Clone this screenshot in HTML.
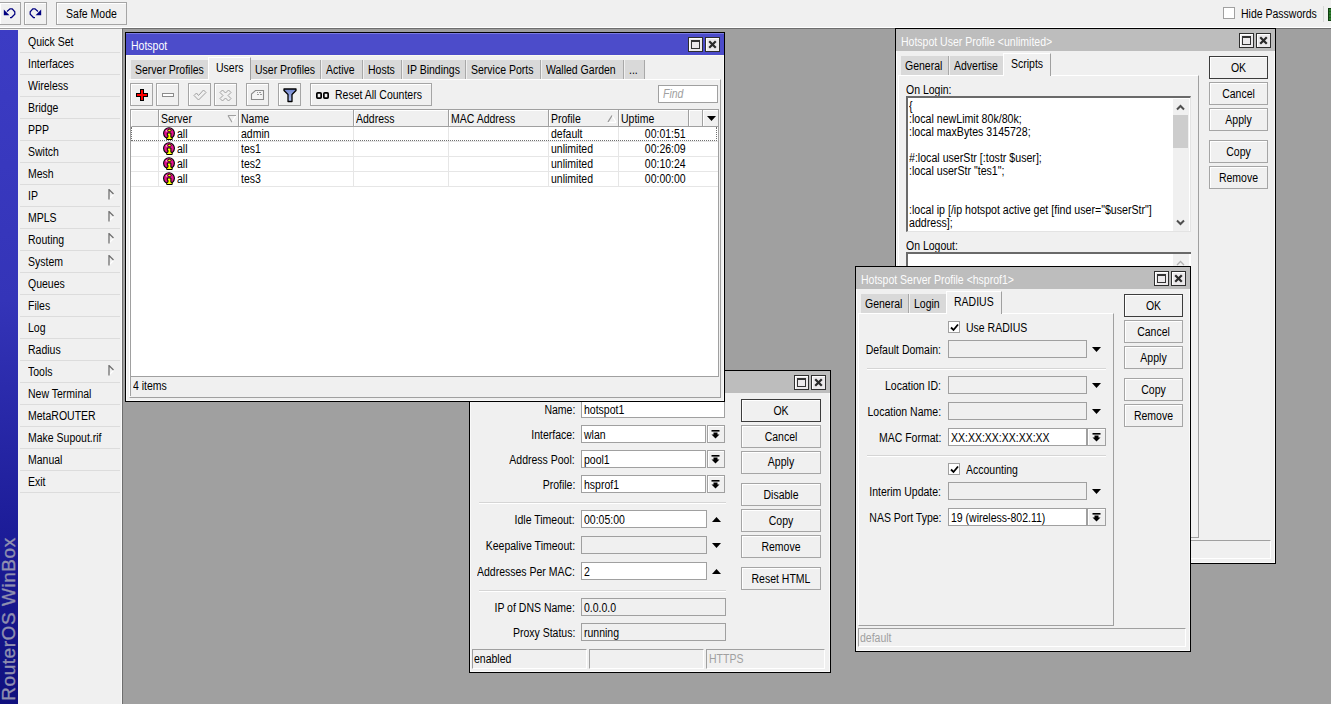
<!DOCTYPE html><html><head><meta charset="utf-8"><style>
*{margin:0;padding:0;box-sizing:border-box}
html,body{width:1331px;height:704px;overflow:hidden;background:#f0f0f0;position:relative}
body>div,body>svg{position:absolute}
.t{position:absolute;font-family:"Liberation Sans",sans-serif;font-size:12px;line-height:14px;white-space:pre;color:#000;transform:scaleX(0.875);transform-origin:0 0}
</style></head><body>
<div style="left:-1px;top:2px;width:22px;height:23px;border:1px solid #a5a5a5;background:#f0f0f0;box-shadow:inset 1px 1px 0 #fff;"></div>
<div style="left:24px;top:2px;width:23px;height:23px;border:1px solid #a5a5a5;background:#f0f0f0;box-shadow:inset 1px 1px 0 #fff;"></div>
<svg style="left:0px;top:0px;width:50px;height:28px" viewBox="0 0 50 28"><path d="M7 11.5L10 8.8H12.2L14.8 11.8V14.2L11.5 17.5H10" stroke="#000080" stroke-width="1.25" fill="none"/><path d="M3.8 9.6V15.2H9.4Z" fill="#000080"/><path d="M38 11.5L35 8.8H32.8L30.2 11.8V14.2L33.5 17.5H35" stroke="#000080" stroke-width="1.25" fill="none"/><path d="M41.2 9.6V15.2H35.6Z" fill="#000080"/></svg>
<div style="left:56px;top:2px;width:71px;height:23px;border:1px solid #a5a5a5;background:#f0f0f0;box-shadow:inset 1px 1px 0 #fff;"></div>
<div class="t" style="left:56px;width:71px;text-align:center;top:7px;transform-origin:50% 0;">Safe Mode</div>
<div style="left:1223px;top:7px;width:12px;height:12px;border:1px solid #a0a0a0;background:#fff;"></div>
<div class="t" style="left:1241px;top:7px;">Hide Passwords</div>
<div style="left:1323px;top:6px;width:1px;height:16px;background:#d8d8d8;"></div>
<div style="left:1328px;top:8px;width:13px;height:13px;background:repeating-linear-gradient(#2a7a2a 0 2px,#1c5a1c 2px 3px);border:1px solid #0f3f0f;"></div>
<div style="left:0px;top:27px;width:1331px;height:1px;background:#fff;"></div>
<div style="left:0px;top:28px;width:1331px;height:1px;background:#a0a0a0;"></div>
<div style="left:0px;top:30px;width:18px;height:674px;background:linear-gradient(#3c3cc4 0%,#3434b8 40%,#1c1c98 75%,#10107e 100%);"></div>
<div class="t" style="left:28px;top:35px;">Quick Set</div>
<div style="left:20px;top:52px;width:100px;height:1px;background:#dcdcdc;"></div>
<div class="t" style="left:28px;top:57px;">Interfaces</div>
<div style="left:20px;top:74px;width:100px;height:1px;background:#dcdcdc;"></div>
<div class="t" style="left:28px;top:79px;">Wireless</div>
<div style="left:20px;top:96px;width:100px;height:1px;background:#dcdcdc;"></div>
<div class="t" style="left:28px;top:101px;">Bridge</div>
<div style="left:20px;top:118px;width:100px;height:1px;background:#dcdcdc;"></div>
<div class="t" style="left:28px;top:123px;">PPP</div>
<div style="left:20px;top:140px;width:100px;height:1px;background:#dcdcdc;"></div>
<div class="t" style="left:28px;top:145px;">Switch</div>
<div style="left:20px;top:162px;width:100px;height:1px;background:#dcdcdc;"></div>
<div class="t" style="left:28px;top:167px;">Mesh</div>
<div style="left:20px;top:184px;width:100px;height:1px;background:#dcdcdc;"></div>
<div class="t" style="left:28px;top:189px;">IP</div>
<div style="left:20px;top:206px;width:100px;height:1px;background:#dcdcdc;"></div>
<svg style="left:108px;top:189px;width:7px;height:11px" viewBox="0 0 7 11"><path d="M1 10L5.5 5.5" stroke="#fff" stroke-width="1.2"/><path d="M1 10.5V0.5L5.5 5" stroke="#707070" stroke-width="1.3" fill="none"/></svg>
<div class="t" style="left:28px;top:211px;">MPLS</div>
<div style="left:20px;top:228px;width:100px;height:1px;background:#dcdcdc;"></div>
<svg style="left:108px;top:211px;width:7px;height:11px" viewBox="0 0 7 11"><path d="M1 10L5.5 5.5" stroke="#fff" stroke-width="1.2"/><path d="M1 10.5V0.5L5.5 5" stroke="#707070" stroke-width="1.3" fill="none"/></svg>
<div class="t" style="left:28px;top:233px;">Routing</div>
<div style="left:20px;top:250px;width:100px;height:1px;background:#dcdcdc;"></div>
<svg style="left:108px;top:233px;width:7px;height:11px" viewBox="0 0 7 11"><path d="M1 10L5.5 5.5" stroke="#fff" stroke-width="1.2"/><path d="M1 10.5V0.5L5.5 5" stroke="#707070" stroke-width="1.3" fill="none"/></svg>
<div class="t" style="left:28px;top:255px;">System</div>
<div style="left:20px;top:272px;width:100px;height:1px;background:#dcdcdc;"></div>
<svg style="left:108px;top:255px;width:7px;height:11px" viewBox="0 0 7 11"><path d="M1 10L5.5 5.5" stroke="#fff" stroke-width="1.2"/><path d="M1 10.5V0.5L5.5 5" stroke="#707070" stroke-width="1.3" fill="none"/></svg>
<div class="t" style="left:28px;top:277px;">Queues</div>
<div style="left:20px;top:294px;width:100px;height:1px;background:#dcdcdc;"></div>
<div class="t" style="left:28px;top:299px;">Files</div>
<div style="left:20px;top:316px;width:100px;height:1px;background:#dcdcdc;"></div>
<div class="t" style="left:28px;top:321px;">Log</div>
<div style="left:20px;top:338px;width:100px;height:1px;background:#dcdcdc;"></div>
<div class="t" style="left:28px;top:343px;">Radius</div>
<div style="left:20px;top:360px;width:100px;height:1px;background:#dcdcdc;"></div>
<div class="t" style="left:28px;top:365px;">Tools</div>
<div style="left:20px;top:382px;width:100px;height:1px;background:#dcdcdc;"></div>
<svg style="left:108px;top:365px;width:7px;height:11px" viewBox="0 0 7 11"><path d="M1 10L5.5 5.5" stroke="#fff" stroke-width="1.2"/><path d="M1 10.5V0.5L5.5 5" stroke="#707070" stroke-width="1.3" fill="none"/></svg>
<div class="t" style="left:28px;top:387px;">New Terminal</div>
<div style="left:20px;top:404px;width:100px;height:1px;background:#dcdcdc;"></div>
<div class="t" style="left:28px;top:409px;">MetaROUTER</div>
<div style="left:20px;top:426px;width:100px;height:1px;background:#dcdcdc;"></div>
<div class="t" style="left:28px;top:431px;">Make Supout.rif</div>
<div style="left:20px;top:448px;width:100px;height:1px;background:#dcdcdc;"></div>
<div class="t" style="left:28px;top:453px;">Manual</div>
<div style="left:20px;top:470px;width:100px;height:1px;background:#dcdcdc;"></div>
<div class="t" style="left:28px;top:475px;">Exit</div>
<div style="left:20px;top:492px;width:100px;height:1px;background:#dcdcdc;"></div>
<div class="t" style="left:-76px;top:610px;width:170px;height:18px;font-size:19px;line-height:18px;letter-spacing:0.55px;color:#9090b0;-webkit-text-stroke:0.35px #9090b0;transform:rotate(-90deg);transform-origin:85px 9px;text-align:center">RouterOS WinBox</div>
<div style="left:121px;top:29px;width:1px;height:675px;background:#fafafa;"></div>
<div style="left:122px;top:28px;width:1209px;height:676px;background:#a0a0a0;"></div>
<div style="left:122px;top:28px;width:1px;height:676px;background:#6e6e6e;"></div>
<div style="left:122px;top:28px;width:1209px;height:1px;background:#6e6e6e;"></div>
<div style="left:895px;top:28px;width:381px;height:536px;background:#000;"></div>
<div style="left:896px;top:29px;width:379px;height:534px;background:#fafafa;"></div>
<div style="left:897px;top:30px;width:377px;height:532px;background:#f0f0f0;"></div>
<div style="left:896px;top:29px;width:379px;height:22px;background:#bdbdbd;"></div>
<div class="t" style="left:901px;top:35px;color:#fcfcfc;">Hotspot User Profile &lt;unlimited&gt;</div>
<div style="left:1239px;top:33px;width:15px;height:15px;border:1px solid #2e2e2e;background:#ebe9eb;box-shadow:inset 1px 1px 0 #fff;"></div>
<div style="left:1242px;top:36px;width:9px;height:9px;border:1px solid #333;border-top-width:2px;background:transparent;"></div>
<div style="left:1256px;top:33px;width:15px;height:15px;border:1px solid #2e2e2e;background:#ebe9eb;box-shadow:inset 1px 1px 0 #fff;"></div>
<svg style="left:1259px;top:36px;width:9px;height:9px" viewBox="0 0 9 9"><path d="M2 2L7 7M7 2L2 7" stroke="#2a2a2a" stroke-width="2.2" stroke-linecap="square"/></svg>
<div style="left:898px;top:75px;width:301px;height:463px;border-left:1px solid #fff;border-top:1px solid #fff;border-right:1px solid #a0a0a0;border-bottom:1px solid #a0a0a0;"></div>
<div style="left:901px;top:56px;width:48px;height:19px;background:#d9d9d9;border-right:1px solid #a8a8a8;"></div>
<div class="t" style="left:905px;top:59px;">General</div>
<div style="left:950px;top:56px;width:53px;height:19px;background:#d9d9d9;"></div>
<div class="t" style="left:954px;top:59px;">Advertise</div>
<div style="left:1003px;top:53px;width:48px;height:23px;background:#f0f0f0;border-left:1px solid #fff;border-top:1px solid #fff;border-right:1px solid #a0a0a0;"></div>
<div class="t" style="left:1011px;top:57px;">Scripts</div>
<div class="t" style="left:906px;top:83px;">On Login:</div>
<div style="left:906px;top:96px;width:285px;height:136px;background:#fff;border-top:2px solid #6a6a6a;border-left:2px solid #6a6a6a;border-right:1px solid #e3e3e3;border-bottom:1px solid #e3e3e3;"></div>
<div class="t" style="left:909px;top:99px;transform:scaleX(0.885);">{</div>
<div class="t" style="left:909px;top:112px;transform:scaleX(0.885);">:local newLimit 80k/80k;</div>
<div class="t" style="left:909px;top:125px;transform:scaleX(0.885);">:local maxBytes 3145728;</div>
<div class="t" style="left:909px;top:151px;transform:scaleX(0.885);">#:local userStr [:tostr $user];</div>
<div class="t" style="left:909px;top:164px;transform:scaleX(0.885);">:local userStr "tes1";</div>
<div class="t" style="left:909px;top:203px;transform:scaleX(0.885);">:local ip [/ip hotspot active get [find user="$userStr"]</div>
<div class="t" style="left:909px;top:216px;transform:scaleX(0.885);">address];</div>
<div style="left:1173px;top:99px;width:16px;height:132px;background:#f0f0f0;"></div>
<div style="left:1173px;top:115px;width:15px;height:33px;background:#cdcdcd;"></div>
<svg style="left:1176px;top:103px;width:9px;height:8px" viewBox="0 0 9 8"><path d="M1 6.5L4.5 3L8 6.5" stroke="#505050" stroke-width="2" fill="none"/></svg>
<svg style="left:1176px;top:219px;width:9px;height:8px" viewBox="0 0 9 8"><path d="M1 1.5L4.5 5L8 1.5" stroke="#505050" stroke-width="2" fill="none"/></svg>
<div class="t" style="left:906px;top:239px;">On Logout:</div>
<div style="left:906px;top:252px;width:285px;height:149px;background:#fff;border-top:2px solid #6a6a6a;border-left:2px solid #6a6a6a;"></div>
<div style="left:1173px;top:254px;width:16px;height:147px;background:#f0f0f0;"></div>
<svg style="left:1176px;top:260px;width:9px;height:6px" viewBox="0 0 9 6"><path d="M1 5L4.5 1.5L8 5" stroke="#b0b0b0" stroke-width="1.3" fill="none"/></svg>
<div style="left:1209px;top:56px;width:59px;height:23px;border:1px solid #3c3c3c;background:#f0f0f0;box-shadow:inset 1px 1px 0 #fff;"></div>
<div class="t" style="left:1209px;width:59px;text-align:center;top:61px;transform-origin:50% 0;">OK</div>
<div style="left:1209px;top:82px;width:59px;height:23px;border:1px solid #a5a5a5;background:#f0f0f0;box-shadow:inset 1px 1px 0 #fff;"></div>
<div class="t" style="left:1209px;width:59px;text-align:center;top:87px;transform-origin:50% 0;">Cancel</div>
<div style="left:1209px;top:108px;width:59px;height:23px;border:1px solid #a5a5a5;background:#f0f0f0;box-shadow:inset 1px 1px 0 #fff;"></div>
<div class="t" style="left:1209px;width:59px;text-align:center;top:113px;transform-origin:50% 0;">Apply</div>
<div style="left:1209px;top:140px;width:59px;height:23px;border:1px solid #a5a5a5;background:#f0f0f0;box-shadow:inset 1px 1px 0 #fff;"></div>
<div class="t" style="left:1209px;width:59px;text-align:center;top:145px;transform-origin:50% 0;">Copy</div>
<div style="left:1209px;top:166px;width:59px;height:23px;border:1px solid #a5a5a5;background:#f0f0f0;box-shadow:inset 1px 1px 0 #fff;"></div>
<div class="t" style="left:1209px;width:59px;text-align:center;top:171px;transform-origin:50% 0;">Remove</div>
<div style="left:898px;top:540px;width:373px;height:19px;border-top:1px solid #a0a0a0;border-left:1px solid #a0a0a0;border-right:1px solid #fff;border-bottom:1px solid #fff;"></div>
<div style="left:855px;top:266px;width:336px;height:386px;background:#000;"></div>
<div style="left:856px;top:267px;width:334px;height:384px;background:#fafafa;"></div>
<div style="left:857px;top:268px;width:332px;height:382px;background:#f0f0f0;"></div>
<div style="left:856px;top:267px;width:334px;height:22px;background:#bdbdbd;"></div>
<div class="t" style="left:861px;top:273px;color:#fcfcfc;">Hotspot Server Profile &lt;hsprof1&gt;</div>
<div style="left:1154px;top:271px;width:15px;height:15px;border:1px solid #2e2e2e;background:#ebe9eb;box-shadow:inset 1px 1px 0 #fff;"></div>
<div style="left:1157px;top:274px;width:9px;height:9px;border:1px solid #333;border-top-width:2px;background:transparent;"></div>
<div style="left:1171px;top:271px;width:15px;height:15px;border:1px solid #2e2e2e;background:#ebe9eb;box-shadow:inset 1px 1px 0 #fff;"></div>
<svg style="left:1174px;top:274px;width:9px;height:9px" viewBox="0 0 9 9"><path d="M2 2L7 7M7 2L2 7" stroke="#2a2a2a" stroke-width="2.2" stroke-linecap="square"/></svg>
<div style="left:858px;top:313px;width:256px;height:313px;border-left:1px solid #fff;border-top:1px solid #fff;border-right:1px solid #a0a0a0;border-bottom:1px solid #a0a0a0;"></div>
<div style="left:861px;top:294px;width:48px;height:19px;background:#d9d9d9;border-right:1px solid #a8a8a8;"></div>
<div class="t" style="left:865px;top:297px;">General</div>
<div style="left:910px;top:294px;width:36px;height:19px;background:#d9d9d9;"></div>
<div class="t" style="left:914px;top:297px;">Login</div>
<div style="left:946px;top:291px;width:56px;height:23px;background:#f0f0f0;border-left:1px solid #fff;border-top:1px solid #fff;border-right:1px solid #a0a0a0;"></div>
<div class="t" style="left:954px;top:295px;">RADIUS</div>
<div style="left:948px;top:321px;width:12px;height:12px;border:1px solid #a0a0a0;background:#fff;"></div>
<svg style="left:950px;top:323px;width:9px;height:9px" viewBox="0 0 9 9"><path d="M1 4.5L3.5 7L8 1.5" stroke="#000" stroke-width="1.8" fill="none"/></svg>
<div class="t" style="left:966px;top:321px;">Use RADIUS</div>
<div class="t" style="right:390px;top:343px;transform-origin:100% 0;">Default Domain:</div>
<div style="left:948px;top:340px;width:139px;height:18px;border:1px solid #a0a0a0;background:#f0f0f0;"></div>
<svg style="left:1092px;top:347px;width:9px;height:5px" viewBox="0 0 9 5"><path d="M0 0H9L4.5 5Z" fill="#000"/></svg>
<div style="left:867px;top:368px;width:239px;height:1px;background:#d5d5d5;"></div>
<div style="left:867px;top:369px;width:239px;height:1px;background:#fff;"></div>
<div class="t" style="right:390px;top:379px;transform-origin:100% 0;">Location ID:</div>
<div style="left:948px;top:376px;width:139px;height:18px;border:1px solid #a0a0a0;background:#f0f0f0;"></div>
<svg style="left:1092px;top:383px;width:9px;height:5px" viewBox="0 0 9 5"><path d="M0 0H9L4.5 5Z" fill="#000"/></svg>
<div class="t" style="right:390px;top:405px;transform-origin:100% 0;">Location Name:</div>
<div style="left:948px;top:402px;width:139px;height:18px;border:1px solid #a0a0a0;background:#f0f0f0;"></div>
<svg style="left:1092px;top:409px;width:9px;height:5px" viewBox="0 0 9 5"><path d="M0 0H9L4.5 5Z" fill="#000"/></svg>
<div class="t" style="right:390px;top:431px;transform-origin:100% 0;">MAC Format:</div>
<div style="left:948px;top:428px;width:139px;height:18px;border:1px solid #a0a0a0;background:#fff;"></div>
<div class="t" style="left:951px;top:431px;">XX:XX:XX:XX:XX:XX</div>
<div style="left:1087px;top:428px;width:19px;height:18px;border:1px solid #a0a0a0;background:#f0f0f0;box-shadow:inset 1px 1px 0 #fff;"></div>
<svg style="left:1092px;top:433px;width:9px;height:9px" viewBox="0 0 9 9"><rect x="0.5" y="0" width="8" height="1.6" fill="#000"/><path d="M2.5 2.5H6.5V4.5H8.5L4.5 8.5L0.5 4.5H2.5Z" fill="#000"/></svg>
<div style="left:867px;top:455px;width:239px;height:1px;background:#d5d5d5;"></div>
<div style="left:867px;top:456px;width:239px;height:1px;background:#fff;"></div>
<div style="left:948px;top:463px;width:12px;height:12px;border:1px solid #a0a0a0;background:#fff;"></div>
<svg style="left:950px;top:465px;width:9px;height:9px" viewBox="0 0 9 9"><path d="M1 4.5L3.5 7L8 1.5" stroke="#000" stroke-width="1.8" fill="none"/></svg>
<div class="t" style="left:966px;top:463px;">Accounting</div>
<div class="t" style="right:390px;top:485px;transform-origin:100% 0;">Interim Update:</div>
<div style="left:948px;top:482px;width:139px;height:18px;border:1px solid #a0a0a0;background:#f0f0f0;"></div>
<svg style="left:1092px;top:489px;width:9px;height:5px" viewBox="0 0 9 5"><path d="M0 0H9L4.5 5Z" fill="#000"/></svg>
<div class="t" style="right:390px;top:511px;transform-origin:100% 0;">NAS Port Type:</div>
<div style="left:948px;top:508px;width:139px;height:18px;border:1px solid #a0a0a0;background:#fff;"></div>
<div class="t" style="left:951px;top:511px;">19 (wireless-802.11)</div>
<div style="left:1087px;top:508px;width:19px;height:18px;border:1px solid #a0a0a0;background:#f0f0f0;box-shadow:inset 1px 1px 0 #fff;"></div>
<svg style="left:1092px;top:513px;width:9px;height:9px" viewBox="0 0 9 9"><rect x="0.5" y="0" width="8" height="1.6" fill="#000"/><path d="M2.5 2.5H6.5V4.5H8.5L4.5 8.5L0.5 4.5H2.5Z" fill="#000"/></svg>
<div style="left:1124px;top:294px;width:59px;height:23px;border:1px solid #3c3c3c;background:#f0f0f0;box-shadow:inset 1px 1px 0 #fff;"></div>
<div class="t" style="left:1124px;width:59px;text-align:center;top:299px;transform-origin:50% 0;">OK</div>
<div style="left:1124px;top:320px;width:59px;height:23px;border:1px solid #a5a5a5;background:#f0f0f0;box-shadow:inset 1px 1px 0 #fff;"></div>
<div class="t" style="left:1124px;width:59px;text-align:center;top:325px;transform-origin:50% 0;">Cancel</div>
<div style="left:1124px;top:346px;width:59px;height:23px;border:1px solid #a5a5a5;background:#f0f0f0;box-shadow:inset 1px 1px 0 #fff;"></div>
<div class="t" style="left:1124px;width:59px;text-align:center;top:351px;transform-origin:50% 0;">Apply</div>
<div style="left:1124px;top:378px;width:59px;height:23px;border:1px solid #a5a5a5;background:#f0f0f0;box-shadow:inset 1px 1px 0 #fff;"></div>
<div class="t" style="left:1124px;width:59px;text-align:center;top:383px;transform-origin:50% 0;">Copy</div>
<div style="left:1124px;top:404px;width:59px;height:23px;border:1px solid #a5a5a5;background:#f0f0f0;box-shadow:inset 1px 1px 0 #fff;"></div>
<div class="t" style="left:1124px;width:59px;text-align:center;top:409px;transform-origin:50% 0;">Remove</div>
<div style="left:858px;top:628px;width:328px;height:19px;border-top:1px solid #a0a0a0;border-left:1px solid #a0a0a0;border-right:1px solid #fff;border-bottom:1px solid #fff;"></div>
<div class="t" style="left:860px;top:631px;color:#a0a0a0;">default</div>
<div style="left:469px;top:370px;width:362px;height:303px;background:#000;"></div>
<div style="left:470px;top:371px;width:360px;height:301px;background:#fafafa;"></div>
<div style="left:471px;top:372px;width:358px;height:299px;background:#f0f0f0;"></div>
<div style="left:470px;top:371px;width:360px;height:22px;background:#bdbdbd;"></div>
<div style="left:794px;top:375px;width:15px;height:15px;border:1px solid #2e2e2e;background:#ebe9eb;box-shadow:inset 1px 1px 0 #fff;"></div>
<div style="left:797px;top:378px;width:9px;height:9px;border:1px solid #333;border-top-width:2px;background:transparent;"></div>
<div style="left:811px;top:375px;width:15px;height:15px;border:1px solid #2e2e2e;background:#ebe9eb;box-shadow:inset 1px 1px 0 #fff;"></div>
<svg style="left:814px;top:378px;width:9px;height:9px" viewBox="0 0 9 9"><path d="M2 2L7 7M7 2L2 7" stroke="#2a2a2a" stroke-width="2.2" stroke-linecap="square"/></svg>
<div class="t" style="right:756px;top:403px;transform-origin:100% 0;">Name:</div>
<div class="t" style="right:756px;top:428px;transform-origin:100% 0;">Interface:</div>
<div class="t" style="right:756px;top:453px;transform-origin:100% 0;">Address Pool:</div>
<div class="t" style="right:756px;top:478px;transform-origin:100% 0;">Profile:</div>
<div class="t" style="right:756px;top:513px;transform-origin:100% 0;">Idle Timeout:</div>
<div class="t" style="right:756px;top:539px;transform-origin:100% 0;">Keepalive Timeout:</div>
<div class="t" style="right:756px;top:565px;transform-origin:100% 0;">Addresses Per MAC:</div>
<div class="t" style="right:756px;top:601px;transform-origin:100% 0;">IP of DNS Name:</div>
<div class="t" style="right:756px;top:626px;transform-origin:100% 0;">Proxy Status:</div>
<div style="left:581px;top:400px;width:144px;height:18px;border:1px solid #a0a0a0;background:#fff;"></div>
<div class="t" style="left:584px;top:403px;">hotspot1</div>
<div style="left:581px;top:425px;width:125px;height:18px;border:1px solid #a0a0a0;background:#fff;"></div>
<div class="t" style="left:584px;top:428px;">wlan</div>
<div style="left:707px;top:425px;width:18px;height:18px;border:1px solid #a0a0a0;background:#f0f0f0;box-shadow:inset 1px 1px 0 #fff;"></div>
<svg style="left:711px;top:430px;width:9px;height:9px" viewBox="0 0 9 9"><rect x="0.5" y="0" width="8" height="1.6" fill="#000"/><path d="M2.5 2.5H6.5V4.5H8.5L4.5 8.5L0.5 4.5H2.5Z" fill="#000"/></svg>
<div style="left:581px;top:450px;width:125px;height:18px;border:1px solid #a0a0a0;background:#fff;"></div>
<div class="t" style="left:584px;top:453px;">pool1</div>
<div style="left:707px;top:450px;width:18px;height:18px;border:1px solid #a0a0a0;background:#f0f0f0;box-shadow:inset 1px 1px 0 #fff;"></div>
<svg style="left:711px;top:455px;width:9px;height:9px" viewBox="0 0 9 9"><rect x="0.5" y="0" width="8" height="1.6" fill="#000"/><path d="M2.5 2.5H6.5V4.5H8.5L4.5 8.5L0.5 4.5H2.5Z" fill="#000"/></svg>
<div style="left:581px;top:475px;width:125px;height:18px;border:1px solid #a0a0a0;background:#fff;"></div>
<div class="t" style="left:584px;top:478px;">hsprof1</div>
<div style="left:707px;top:475px;width:18px;height:18px;border:1px solid #a0a0a0;background:#f0f0f0;box-shadow:inset 1px 1px 0 #fff;"></div>
<svg style="left:711px;top:480px;width:9px;height:9px" viewBox="0 0 9 9"><rect x="0.5" y="0" width="8" height="1.6" fill="#000"/><path d="M2.5 2.5H6.5V4.5H8.5L4.5 8.5L0.5 4.5H2.5Z" fill="#000"/></svg>
<div style="left:479px;top:502px;width:247px;height:1px;background:#d5d5d5;"></div>
<div style="left:479px;top:503px;width:247px;height:1px;background:#fff;"></div>
<div style="left:581px;top:510px;width:126px;height:18px;border:1px solid #a0a0a0;background:#fff;"></div>
<div class="t" style="left:584px;top:513px;">00:05:00</div>
<svg style="left:712px;top:517px;width:9px;height:5px" viewBox="0 0 9 5"><path d="M0 5H9L4.5 0Z" fill="#000"/></svg>
<div style="left:581px;top:536px;width:126px;height:18px;border:1px solid #a0a0a0;background:#f0f0f0;"></div>
<svg style="left:712px;top:543px;width:9px;height:5px" viewBox="0 0 9 5"><path d="M0 0H9L4.5 5Z" fill="#000"/></svg>
<div style="left:581px;top:562px;width:126px;height:18px;border:1px solid #a0a0a0;background:#fff;"></div>
<div class="t" style="left:584px;top:565px;">2</div>
<svg style="left:712px;top:569px;width:9px;height:5px" viewBox="0 0 9 5"><path d="M0 5H9L4.5 0Z" fill="#000"/></svg>
<div style="left:479px;top:590px;width:247px;height:1px;background:#d5d5d5;"></div>
<div style="left:479px;top:591px;width:247px;height:1px;background:#fff;"></div>
<div style="left:581px;top:598px;width:145px;height:18px;border:1px solid #a0a0a0;background:#f0f0f0;"></div>
<div class="t" style="left:584px;top:601px;">0.0.0.0</div>
<div style="left:581px;top:623px;width:145px;height:18px;border:1px solid #a0a0a0;background:#f0f0f0;"></div>
<div class="t" style="left:584px;top:626px;">running</div>
<div style="left:741px;top:399px;width:80px;height:23px;border:1px solid #3c3c3c;background:#f0f0f0;box-shadow:inset 1px 1px 0 #fff;"></div>
<div class="t" style="left:741px;width:80px;text-align:center;top:404px;transform-origin:50% 0;">OK</div>
<div style="left:741px;top:425px;width:80px;height:23px;border:1px solid #a5a5a5;background:#f0f0f0;box-shadow:inset 1px 1px 0 #fff;"></div>
<div class="t" style="left:741px;width:80px;text-align:center;top:430px;transform-origin:50% 0;">Cancel</div>
<div style="left:741px;top:451px;width:80px;height:23px;border:1px solid #a5a5a5;background:#f0f0f0;box-shadow:inset 1px 1px 0 #fff;"></div>
<div class="t" style="left:741px;width:80px;text-align:center;top:455px;transform-origin:50% 0;">Apply</div>
<div style="left:741px;top:483px;width:80px;height:23px;border:1px solid #a5a5a5;background:#f0f0f0;box-shadow:inset 1px 1px 0 #fff;"></div>
<div class="t" style="left:741px;width:80px;text-align:center;top:488px;transform-origin:50% 0;">Disable</div>
<div style="left:741px;top:509px;width:80px;height:23px;border:1px solid #a5a5a5;background:#f0f0f0;box-shadow:inset 1px 1px 0 #fff;"></div>
<div class="t" style="left:741px;width:80px;text-align:center;top:514px;transform-origin:50% 0;">Copy</div>
<div style="left:741px;top:535px;width:80px;height:23px;border:1px solid #a5a5a5;background:#f0f0f0;box-shadow:inset 1px 1px 0 #fff;"></div>
<div class="t" style="left:741px;width:80px;text-align:center;top:540px;transform-origin:50% 0;">Remove</div>
<div style="left:741px;top:567px;width:80px;height:23px;border:1px solid #a5a5a5;background:#f0f0f0;box-shadow:inset 1px 1px 0 #fff;"></div>
<div class="t" style="left:741px;width:80px;text-align:center;top:572px;transform-origin:50% 0;">Reset HTML</div>
<div style="left:472px;top:649px;width:115px;height:20px;border-top:1px solid #a0a0a0;border-left:1px solid #a0a0a0;border-right:1px solid #fff;border-bottom:1px solid #fff;"></div>
<div style="left:589px;top:649px;width:115px;height:20px;border-top:1px solid #a0a0a0;border-left:1px solid #a0a0a0;border-right:1px solid #fff;border-bottom:1px solid #fff;"></div>
<div style="left:706px;top:649px;width:119px;height:20px;border-top:1px solid #a0a0a0;border-left:1px solid #a0a0a0;border-right:1px solid #fff;border-bottom:1px solid #fff;"></div>
<div class="t" style="left:474px;top:652px;">enabled</div>
<div class="t" style="left:709px;top:652px;color:#a0a0a0;">HTTPS</div>
<div style="left:125px;top:32px;width:600px;height:370px;background:#000;"></div>
<div style="left:126px;top:33px;width:598px;height:368px;background:#fafafa;"></div>
<div style="left:127px;top:34px;width:596px;height:366px;background:#f0f0f0;"></div>
<div style="left:126px;top:33px;width:598px;height:22px;background:#4c4cca;"></div>
<div style="left:126px;top:33px;width:598px;height:1px;background:#7b7be0;"></div>
<div class="t" style="left:131px;top:39px;color:#ffffff;">Hotspot</div>
<div style="left:688px;top:37px;width:15px;height:15px;border:1px solid #2e2e2e;background:#ebe9eb;box-shadow:inset 1px 1px 0 #fff;"></div>
<div style="left:691px;top:40px;width:9px;height:9px;border:1px solid #333;border-top-width:2px;background:transparent;"></div>
<div style="left:705px;top:37px;width:15px;height:15px;border:1px solid #2e2e2e;background:#ebe9eb;box-shadow:inset 1px 1px 0 #fff;"></div>
<svg style="left:708px;top:40px;width:9px;height:9px" viewBox="0 0 9 9"><path d="M2 2L7 7M7 2L2 7" stroke="#2a2a2a" stroke-width="2.2" stroke-linecap="square"/></svg>
<div style="left:126px;top:55px;width:598px;height:1px;background:#fafaf0;"></div>
<div style="left:129px;top:79px;width:592px;height:319px;border-left:1px solid #fff;border-top:1px solid #fff;border-right:1px solid #a0a0a0;border-bottom:1px solid #a0a0a0;"></div>
<div style="left:130px;top:377px;width:1px;height:19px;background:#a0a0a0;"></div>
<div style="left:131px;top:60px;width:77px;height:19px;background:#d9d9d9;"></div>
<div class="t" style="left:135px;top:63px;">Server Profiles</div>
<div style="left:208px;top:57px;width:43px;height:23px;background:#f0f0f0;border-left:1px solid #fff;border-top:1px solid #fff;border-right:1px solid #a0a0a0;"></div>
<div class="t" style="left:216px;top:61px;">Users</div>
<div style="left:251px;top:60px;width:70px;height:19px;background:#d9d9d9;border-right:1px solid #a8a8a8;"></div>
<div class="t" style="left:255px;top:63px;">User Profiles</div>
<div style="left:322px;top:60px;width:41px;height:19px;background:#d9d9d9;border-right:1px solid #a8a8a8;"></div>
<div class="t" style="left:326px;top:63px;">Active</div>
<div style="left:364px;top:60px;width:38px;height:19px;background:#d9d9d9;border-right:1px solid #a8a8a8;"></div>
<div class="t" style="left:368px;top:63px;">Hosts</div>
<div style="left:403px;top:60px;width:63px;height:19px;background:#d9d9d9;border-right:1px solid #a8a8a8;"></div>
<div class="t" style="left:407px;top:63px;">IP Bindings</div>
<div style="left:467px;top:60px;width:74px;height:19px;background:#d9d9d9;border-right:1px solid #a8a8a8;"></div>
<div class="t" style="left:471px;top:63px;">Service Ports</div>
<div style="left:542px;top:60px;width:82px;height:19px;background:#d9d9d9;border-right:1px solid #a8a8a8;"></div>
<div class="t" style="left:546px;top:63px;">Walled Garden</div>
<div style="left:625px;top:60px;width:20px;height:19px;background:#d9d9d9;border-right:1px solid #a8a8a8;"></div>
<div class="t" style="left:629px;top:63px;">...</div>
<div style="left:130px;top:83px;width:23px;height:23px;border:1px solid #a5a5a5;background:#f0f0f0;box-shadow:inset 1px 1px 0 #fff;"></div>
<div style="left:156px;top:83px;width:23px;height:23px;border:1px solid #a5a5a5;background:#f0f0f0;box-shadow:inset 1px 1px 0 #fff;"></div>
<div style="left:188px;top:83px;width:23px;height:23px;border:1px solid #a5a5a5;background:#f0f0f0;box-shadow:inset 1px 1px 0 #fff;"></div>
<div style="left:214px;top:83px;width:23px;height:23px;border:1px solid #a5a5a5;background:#f0f0f0;box-shadow:inset 1px 1px 0 #fff;"></div>
<div style="left:246px;top:83px;width:23px;height:23px;border:1px solid #a5a5a5;background:#f0f0f0;box-shadow:inset 1px 1px 0 #fff;"></div>
<div style="left:278px;top:83px;width:23px;height:23px;border:1px solid #a5a5a5;background:#f0f0f0;box-shadow:inset 1px 1px 0 #fff;"></div>
<svg style="left:136px;top:89px;width:12px;height:12px" viewBox="0 0 12 12" shape-rendering="crispEdges"><path d="M4 0H8V4H12V8H8V12H4V8H0V4H4Z" fill="#000"/><path d="M5 1H7V5H11V7H7V11H5V7H1V5H5Z" fill="#f00"/></svg>
<svg style="left:162px;top:93px;width:12px;height:4px" viewBox="0 0 12 4"><rect x="0.5" y="0.5" width="11" height="3" fill="#fff" stroke="#8c8c8c" stroke-width="1"/></svg>
<svg style="left:188px;top:83px;width:23px;height:23px" viewBox="0 0 23 23"><path d="M6 12.5L8.5 10L10.5 12.5L15.5 7L18 9.5L10.5 17Z" fill="none" stroke="#a0a0a0" stroke-width="1"/></svg>
<svg style="left:214px;top:83px;width:23px;height:23px" viewBox="0 0 23 23"><path d="M8.5 7L11.5 10L14.5 7L17 9.5L14 12.5L17 15.5L14.5 18L11.5 15L8.5 18L6 15.5L9 12.5L6 9.5Z" fill="none" stroke="#a0a0a0" stroke-width="1"/></svg>
<svg style="left:246px;top:83px;width:23px;height:23px" viewBox="0 0 23 23"><path d="M9.5 7.5H17.5V16.5H5.5V11Z" fill="#f4f4f4" stroke="#8a8a8a" stroke-width="1.1"/><path d="M11 9.5H12M13 9.5H15M11 11.5H13M14 11.5H16" stroke="#9a9a9a" stroke-width="1"/></svg>
<svg style="left:278px;top:83px;width:23px;height:23px" viewBox="0 0 23 23"><defs><linearGradient id="fg" x1="0" x2="0" y1="0" y2="1"><stop offset="0" stop-color="#6f84d0"/><stop offset="1" stop-color="#b8c6f0"/></linearGradient></defs><path d="M6 6H18V7.5L14 11.5V18.5H10V11.5L6 7.5Z" fill="url(#fg)" stroke="#000" stroke-width="1.3" stroke-linejoin="round"/></svg>
<div style="left:310px;top:83px;width:122px;height:23px;border:1px solid #a5a5a5;background:#f0f0f0;box-shadow:inset 1px 1px 0 #fff;"></div>
<svg style="left:316px;top:92px;width:14px;height:7px" viewBox="0 0 14 7"><rect x="0.85" y="0.85" width="4.3" height="5.3" rx="0.9" fill="none" stroke="#000" stroke-width="1.7"/><rect x="7.85" y="0.85" width="4.3" height="5.3" rx="0.9" fill="none" stroke="#000" stroke-width="1.7"/></svg>
<div class="t" style="left:335px;top:88px;">Reset All Counters</div>
<div style="left:658px;top:85px;width:60px;height:18px;border:1px solid #a0a0a0;background:#fff;"></div>
<div class="t" style="left:663px;top:87px;font-style:italic;color:#a0a0a0;">Find</div>
<div style="left:130px;top:109px;width:589px;height:268px;background:#fff;border:1px solid #a0a0a0;"></div>
<div style="left:131px;top:110px;width:587px;height:17px;background:#f0f0f0;border-bottom:1px solid #a0a0a0;border-top:1px solid #fff;border-left:1px solid #fff;"></div>
<div style="left:159px;top:111px;width:1px;height:15px;background:#fff;"></div>
<div style="left:239px;top:111px;width:1px;height:15px;background:#fff;"></div>
<div style="left:354px;top:111px;width:1px;height:15px;background:#fff;"></div>
<div style="left:449px;top:111px;width:1px;height:15px;background:#fff;"></div>
<div style="left:549px;top:111px;width:1px;height:15px;background:#fff;"></div>
<div style="left:619px;top:111px;width:1px;height:15px;background:#fff;"></div>
<div style="left:689px;top:111px;width:1px;height:15px;background:#fff;"></div>
<div style="left:703px;top:111px;width:1px;height:15px;background:#fff;"></div>
<div style="left:158px;top:110px;width:1px;height:17px;background:#a0a0a0;"></div>
<div style="left:238px;top:110px;width:1px;height:17px;background:#a0a0a0;"></div>
<div style="left:353px;top:110px;width:1px;height:17px;background:#a0a0a0;"></div>
<div style="left:448px;top:110px;width:1px;height:17px;background:#a0a0a0;"></div>
<div style="left:548px;top:110px;width:1px;height:17px;background:#a0a0a0;"></div>
<div style="left:618px;top:110px;width:1px;height:17px;background:#a0a0a0;"></div>
<div style="left:688px;top:110px;width:1px;height:17px;background:#a0a0a0;"></div>
<div style="left:702px;top:110px;width:1px;height:17px;background:#a0a0a0;"></div>
<div style="left:158px;top:127px;width:1px;height:59px;background:#e6e6e6;"></div>
<div style="left:238px;top:127px;width:1px;height:59px;background:#e6e6e6;"></div>
<div style="left:353px;top:127px;width:1px;height:59px;background:#e6e6e6;"></div>
<div style="left:448px;top:127px;width:1px;height:59px;background:#e6e6e6;"></div>
<div style="left:548px;top:127px;width:1px;height:59px;background:#e6e6e6;"></div>
<div style="left:618px;top:127px;width:1px;height:59px;background:#e6e6e6;"></div>
<div class="t" style="left:161px;top:112px;">Server</div>
<div class="t" style="left:241px;top:112px;">Name</div>
<div class="t" style="left:356px;top:112px;">Address</div>
<div class="t" style="left:451px;top:112px;">MAC Address</div>
<div class="t" style="left:551px;top:112px;">Profile</div>
<div class="t" style="left:621px;top:112px;">Uptime</div>
<svg style="left:707px;top:116px;width:9px;height:5px" viewBox="0 0 9 5"><path d="M0 0H9L4.5 5Z" fill="#000"/></svg>
<svg style="left:227px;top:114px;width:10px;height:9px" viewBox="0 0 10 9"><path d="M9 1.5L5 8.3" stroke="#fff" stroke-width="1.2"/><path d="M1 1.5H9M1 1.5L5 8.3" stroke="#a0a0a0" stroke-width="1.2"/></svg>
<svg style="left:607px;top:114px;width:10px;height:9px" viewBox="0 0 10 9"><path d="M5 1.5L9 8M1 8.3H9" stroke="#fff" stroke-width="1.2"/><path d="M1 8L5 1.5" stroke="#959595" stroke-width="1.3"/></svg>
<div style="left:131px;top:141px;width:587px;height:1px;background:#e6e6e6;"></div>
<svg style="left:163px;top:127px;width:13px;height:14px" viewBox="0 0 13 14"><circle cx="6" cy="6.2" r="5.4" fill="#e2138c" stroke="#000" stroke-width="1.1"/><circle cx="3.6" cy="3.8" r="0.9" fill="#ffa8dc"/><ellipse cx="6.4" cy="3.4" rx="1.7" ry="1.1" fill="#ff0" stroke="#000" stroke-width="0.8"/><path d="M4.3 6H7.9V10.3H9.2V12.5H3.7V10.3H5V8.1H4.3Z" fill="#ff0" stroke="#000" stroke-width="1"/></svg>
<div class="t" style="left:177px;top:127px;">all</div>
<div class="t" style="left:241px;top:127px;">admin</div>
<div class="t" style="left:551px;top:127px;">default</div>
<div class="t" style="right:645px;top:127px;transform-origin:100% 0;">00:01:51</div>
<div style="left:131px;top:156px;width:587px;height:1px;background:#e6e6e6;"></div>
<svg style="left:163px;top:142px;width:13px;height:14px" viewBox="0 0 13 14"><circle cx="6" cy="6.2" r="5.4" fill="#e2138c" stroke="#000" stroke-width="1.1"/><circle cx="3.6" cy="3.8" r="0.9" fill="#ffa8dc"/><ellipse cx="6.4" cy="3.4" rx="1.7" ry="1.1" fill="#ff0" stroke="#000" stroke-width="0.8"/><path d="M4.3 6H7.9V10.3H9.2V12.5H3.7V10.3H5V8.1H4.3Z" fill="#ff0" stroke="#000" stroke-width="1"/></svg>
<div class="t" style="left:177px;top:142px;">all</div>
<div class="t" style="left:241px;top:142px;">tes1</div>
<div class="t" style="left:551px;top:142px;">unlimited</div>
<div class="t" style="right:645px;top:142px;transform-origin:100% 0;">00:26:09</div>
<div style="left:131px;top:171px;width:587px;height:1px;background:#e6e6e6;"></div>
<svg style="left:163px;top:157px;width:13px;height:14px" viewBox="0 0 13 14"><circle cx="6" cy="6.2" r="5.4" fill="#e2138c" stroke="#000" stroke-width="1.1"/><circle cx="3.6" cy="3.8" r="0.9" fill="#ffa8dc"/><ellipse cx="6.4" cy="3.4" rx="1.7" ry="1.1" fill="#ff0" stroke="#000" stroke-width="0.8"/><path d="M4.3 6H7.9V10.3H9.2V12.5H3.7V10.3H5V8.1H4.3Z" fill="#ff0" stroke="#000" stroke-width="1"/></svg>
<div class="t" style="left:177px;top:157px;">all</div>
<div class="t" style="left:241px;top:157px;">tes2</div>
<div class="t" style="left:551px;top:157px;">unlimited</div>
<div class="t" style="right:645px;top:157px;transform-origin:100% 0;">00:10:24</div>
<div style="left:131px;top:186px;width:587px;height:1px;background:#e6e6e6;"></div>
<svg style="left:163px;top:172px;width:13px;height:14px" viewBox="0 0 13 14"><circle cx="6" cy="6.2" r="5.4" fill="#e2138c" stroke="#000" stroke-width="1.1"/><circle cx="3.6" cy="3.8" r="0.9" fill="#ffa8dc"/><ellipse cx="6.4" cy="3.4" rx="1.7" ry="1.1" fill="#ff0" stroke="#000" stroke-width="0.8"/><path d="M4.3 6H7.9V10.3H9.2V12.5H3.7V10.3H5V8.1H4.3Z" fill="#ff0" stroke="#000" stroke-width="1"/></svg>
<div class="t" style="left:177px;top:172px;">all</div>
<div class="t" style="left:241px;top:172px;">tes3</div>
<div class="t" style="left:551px;top:172px;">unlimited</div>
<div class="t" style="right:645px;top:172px;transform-origin:100% 0;">00:00:00</div>
<div style="left:131px;top:127px;width:586px;height:14px;border:1px dotted #707070;border-top:none"></div>
<div style="left:130px;top:377px;width:591px;height:21px;"></div>
<div class="t" style="left:133px;top:379px;">4 items</div>
</body></html>
